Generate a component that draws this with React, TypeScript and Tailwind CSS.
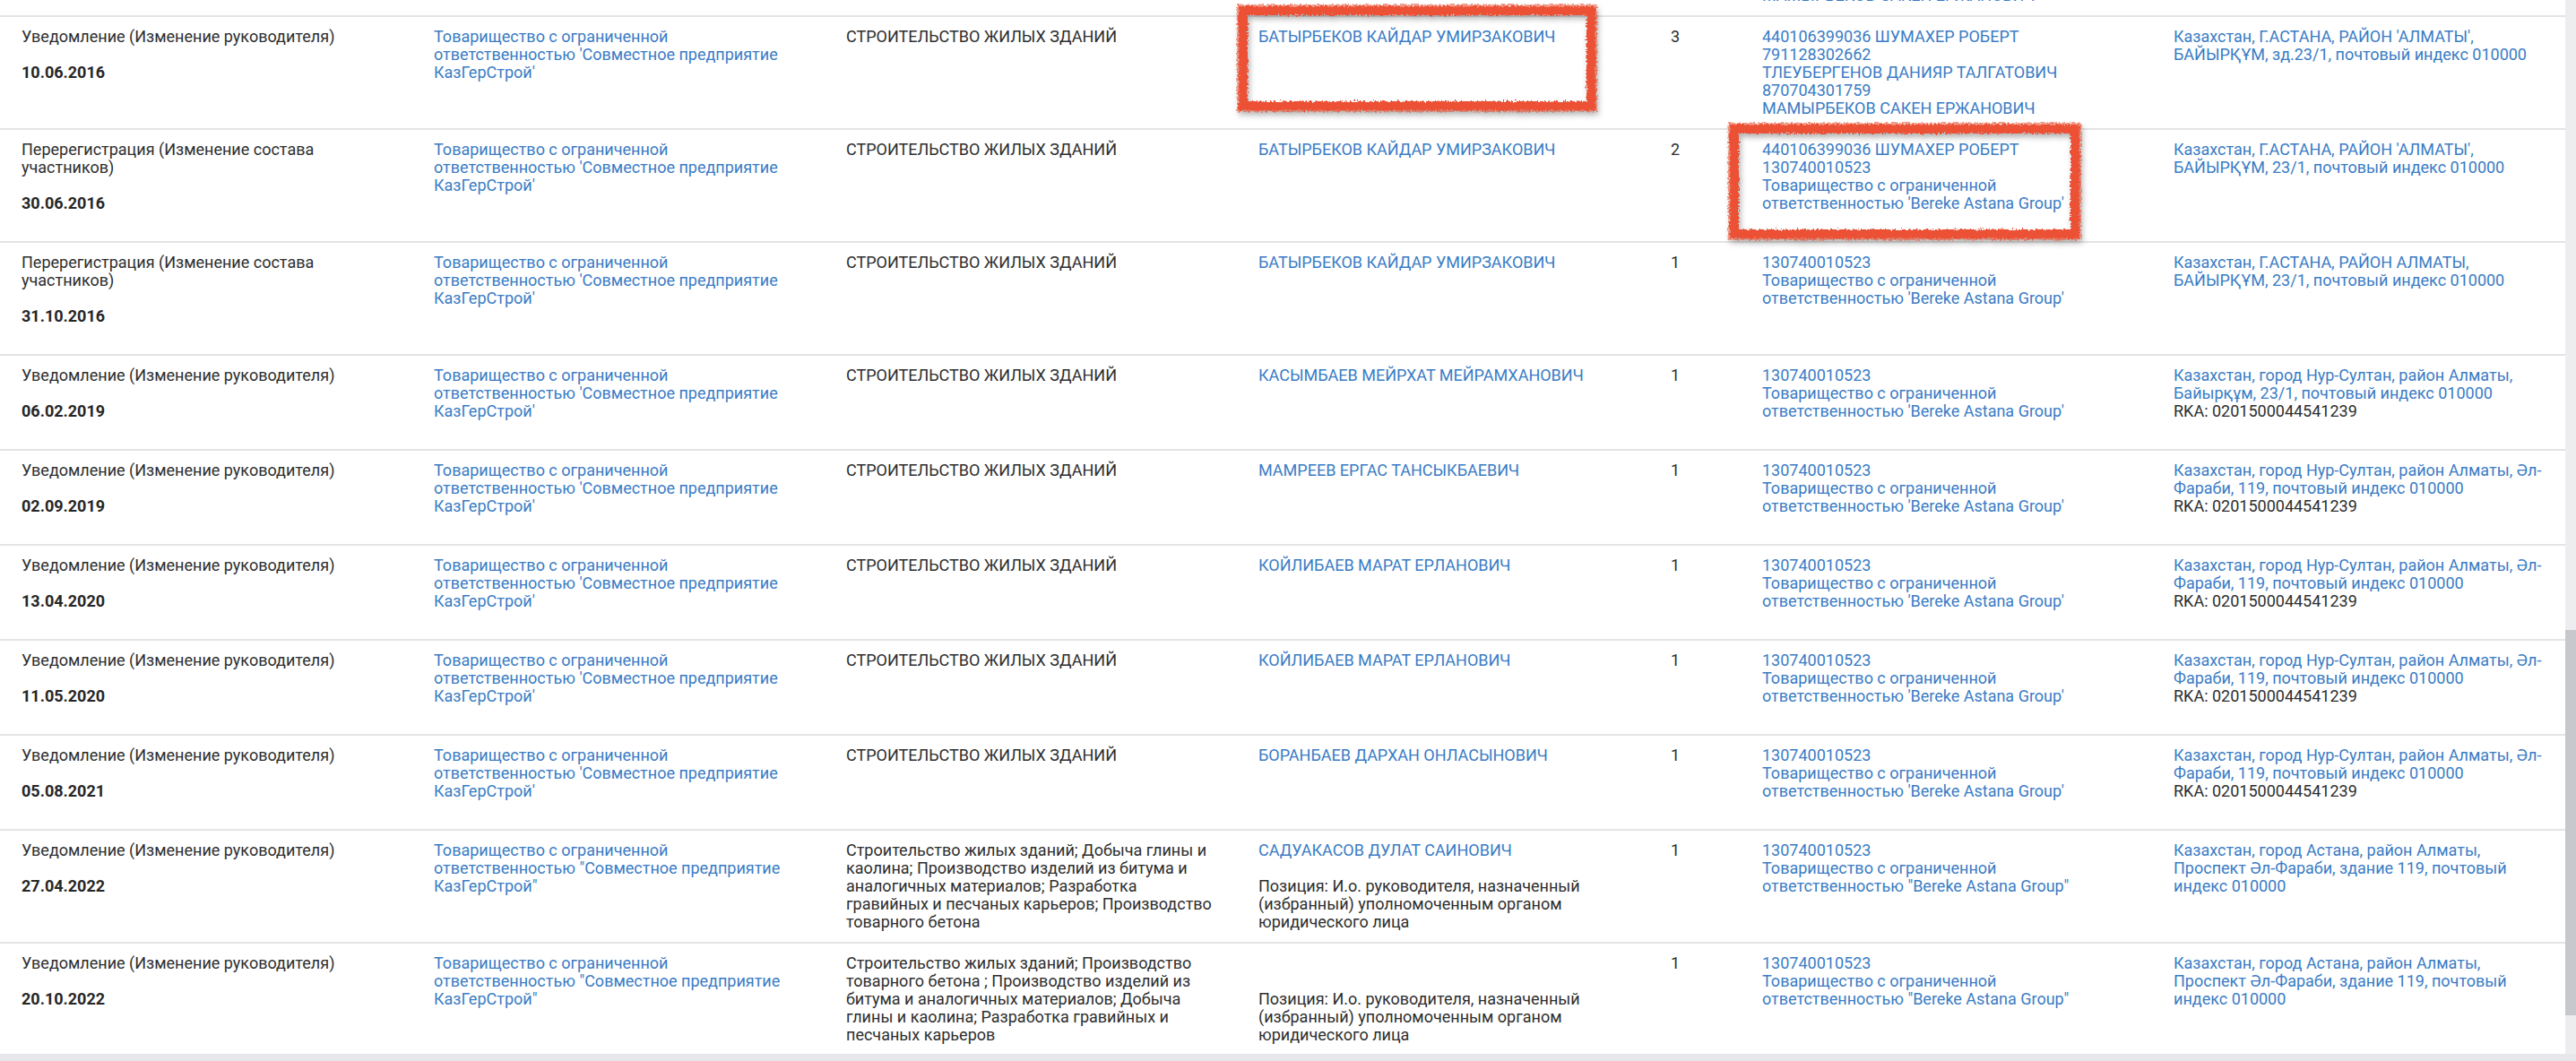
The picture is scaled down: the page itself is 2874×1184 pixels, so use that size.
import React from "react";

type Row = {
  kind: string;
  date: string;
  company: string;
  activity: string;
  head: string;
  position?: string;
  count: string;
  founders: string[];
  address: string;
  rka?: string;
  mark?: "head" | "founders";
};

const kgs1 = "Товарищество с ограниченной ответственностью 'Совместное предприятие КазГерСтрой'";
const kgs2 = 'Товарищество с ограниченной ответственностью "Совместное предприятие КазГерСтрой"';
const bereke1 = "Товарищество с ограниченной ответственностью 'Bereke Astana Group'";
const bereke2 = 'Товарищество с ограниченной ответственностью "Bereke Astana Group"';
const notice = "Уведомление (Изменение руководителя)";
const rereg = "Перерегистрация (Изменение состава участников)";
const housing = "СТРОИТЕЛЬСТВО ЖИЛЫХ ЗДАНИЙ";
const farabi = "Казахстан, город Нур-Султан, район Алматы, Әл-Фараби, 119, почтовый индекс 010000";
const astana = "Казахстан, город Астана, район Алматы, Проспект Әл-Фараби, здание 119, почтовый индекс 010000";
const rka = "RKA: 0201500044541239";
const position =
  "Позиция: И.о. руководителя, назначенный (избранный) уполномоченным органом юридического лица";

const threeFounders = [
  "440106399036 ШУМАХЕР РОБЕРТ",
  "791128302662",
  "ТЛЕУБЕРГЕНОВ ДАНИЯР ТАЛГАТОВИЧ",
  "870704301759",
  "МАМЫРБЕКОВ САКЕН ЕРЖАНОВИЧ",
];

const rows: Row[] = [
  // the row above, scrolled mostly out of view
  {
    kind: notice,
    date: "24.05.2016",
    company: kgs1,
    activity: housing,
    head: "БАТЫРБЕКОВ КАЙДАР УМИРЗАКОВИЧ",
    count: "3",
    founders: threeFounders,
    address: "Казахстан, Г.АСТАНА, РАЙОН 'АЛМАТЫ', БАЙЫРҚҰМ, зд.23/1, почтовый индекс 010000",
  },
  {
    kind: notice,
    date: "10.06.2016",
    company: kgs1,
    activity: housing,
    head: "БАТЫРБЕКОВ КАЙДАР УМИРЗАКОВИЧ",
    count: "3",
    founders: threeFounders,
    address: "Казахстан, Г.АСТАНА, РАЙОН 'АЛМАТЫ', БАЙЫРҚҰМ, зд.23/1, почтовый индекс 010000",
    mark: "head",
  },
  {
    kind: rereg,
    date: "30.06.2016",
    company: kgs1,
    activity: housing,
    head: "БАТЫРБЕКОВ КАЙДАР УМИРЗАКОВИЧ",
    count: "2",
    founders: ["440106399036 ШУМАХЕР РОБЕРТ", "130740010523", bereke1],
    address: "Казахстан, Г.АСТАНА, РАЙОН 'АЛМАТЫ', БАЙЫРҚҰМ, 23/1, почтовый индекс 010000",
    mark: "founders",
  },
  {
    kind: rereg,
    date: "31.10.2016",
    company: kgs1,
    activity: housing,
    head: "БАТЫРБЕКОВ КАЙДАР УМИРЗАКОВИЧ",
    count: "1",
    founders: ["130740010523", bereke1],
    address: "Казахстан, Г.АСТАНА, РАЙОН АЛМАТЫ, БАЙЫРҚҰМ, 23/1, почтовый индекс 010000",
  },
  {
    kind: notice,
    date: "06.02.2019",
    company: kgs1,
    activity: housing,
    head: "КАСЫМБАЕВ МЕЙРХАТ МЕЙРАМХАНОВИЧ",
    count: "1",
    founders: ["130740010523", bereke1],
    address: "Казахстан, город Нур-Султан, район Алматы, Байырқұм, 23/1, почтовый индекс 010000",
    rka,
  },
  {
    kind: notice,
    date: "02.09.2019",
    company: kgs1,
    activity: housing,
    head: "МАМРЕЕВ ЕРГАС ТАНСЫКБАЕВИЧ",
    count: "1",
    founders: ["130740010523", bereke1],
    address: farabi,
    rka,
  },
  {
    kind: notice,
    date: "13.04.2020",
    company: kgs1,
    activity: housing,
    head: "КОЙЛИБАЕВ МАРАТ ЕРЛАНОВИЧ",
    count: "1",
    founders: ["130740010523", bereke1],
    address: farabi,
    rka,
  },
  {
    kind: notice,
    date: "11.05.2020",
    company: kgs1,
    activity: housing,
    head: "КОЙЛИБАЕВ МАРАТ ЕРЛАНОВИЧ",
    count: "1",
    founders: ["130740010523", bereke1],
    address: farabi,
    rka,
  },
  {
    kind: notice,
    date: "05.08.2021",
    company: kgs1,
    activity: housing,
    head: "БОРАНБАЕВ ДАРХАН ОНЛАСЫНОВИЧ",
    count: "1",
    founders: ["130740010523", bereke1],
    address: farabi,
    rka,
  },
  {
    kind: notice,
    date: "27.04.2022",
    company: kgs2,
    activity:
      "Строительство жилых зданий; Добыча глины и каолина; Производство изделий из битума и аналогичных материалов; Разработка гравийных и песчаных карьеров; Производство товарного бетона",
    head: "САДУАКАСОВ ДУЛАТ САИНОВИЧ",
    position,
    count: "1",
    founders: ["130740010523", bereke2],
    address: astana,
  },
  {
    kind: notice,
    date: "20.10.2022",
    company: kgs2,
    activity:
      "Строительство жилых зданий; Производство товарного бетона ; Производство изделий из битума и аналогичных материалов; Добыча глины и каолина; Разработка гравийных и песчаных карьеров",
    head: "",
    position,
    count: "1",
    founders: ["130740010523", bereke2],
    address: astana,
  },
];

// hand drawn red frame, as in the marked-up screenshot
function RedFrame({ w, h, className }: { w: number; h: number; className: string }) {
  const id = `rough-${w}-${h}`;
  return (
    <svg
      width={w}
      height={h}
      viewBox={`0 0 ${w} ${h}`}
      className={`pointer-events-none absolute drop-shadow-[2px_4px_3px_rgba(0,0,0,0.3)] ${className}`}
    >
      <defs>
        <filter id={id} x="-5%" y="-10%" width="110%" height="120%">
          <feTurbulence type="fractalNoise" baseFrequency="0.45" numOctaves="3" seed="7" />
          <feDisplacementMap in="SourceGraphic" scale="6" />
        </filter>
      </defs>
      <rect
        x={8}
        y={8}
        width={w - 16}
        height={h - 16}
        fill="none"
        stroke="#e8412a"
        strokeWidth={10}
        filter={`url(#${id})`}
      />
      <rect
        x={7}
        y={7}
        width={w - 14}
        height={h - 14}
        fill="none"
        stroke="#ee5a3c"
        strokeOpacity={0.6}
        strokeWidth={12}
        filter={`url(#${id})`}
      />
    </svg>
  );
}

const link = "text-[#3a7cc5]";

function TableRow({ r }: { r: Row }) {
  return (
    <div className="grid grid-cols-[460px_460px_460px_460px_102px_459px_461px] border-b-2 border-[#e4e4e4]">
      <div className="px-6 py-3">
        <div>{r.kind}</div>
        <div className="my-5 font-bold text-[#262626]">{r.date}</div>
      </div>
      <div className="px-6 py-3">
        <span className={link}>{r.company}</span>
      </div>
      <div className="px-6 py-3">{r.activity}</div>
      <div className="relative px-6 py-3">
        {r.head ? <div className={link}>{r.head}</div> : <div className="h-5" />}
        {r.position && <div className="mt-5">{r.position}</div>}
        {r.mark === "head" && <RedFrame w={404} h={122} className="-left-px -top-[15px]" />}
      </div>
      <div className="px-6 py-3">{r.count}</div>
      <div className="relative px-6 py-3">
        {r.founders.map((f, i) => (
          <div key={i} className={link}>
            {f}
          </div>
        ))}
        {r.mark === "founders" && <RedFrame w={396} h={133} className="-left-[15px] -top-[9px]" />}
      </div>
      <div className="px-6 py-3">
        <div className={link}>{r.address}</div>
        {r.rka && <div>{r.rka}</div>}
      </div>
    </div>
  );
}

export default function App() {
  return (
    <div className="flex h-[1184px] w-[2874px] flex-col overflow-hidden bg-white font-['Roboto',sans-serif] text-[18px] leading-[20px] text-[#2e2e2e]">
      <div className="flex h-[1176px] overflow-hidden">
        <div className="w-[2862px] overflow-hidden">
          <div className="-mt-[107px]">
            {rows.map((r, i) => (
              <TableRow key={i} r={r} />
            ))}
          </div>
        </div>
        <div className="flex w-3 flex-col bg-[#ededf0]">
          <div className="h-[703px]" />
          <div className="h-[430px] bg-[#c6c8cd]" />
        </div>
      </div>
      <div className="h-2 bg-[#e6e7eb]" />
    </div>
  );
}
